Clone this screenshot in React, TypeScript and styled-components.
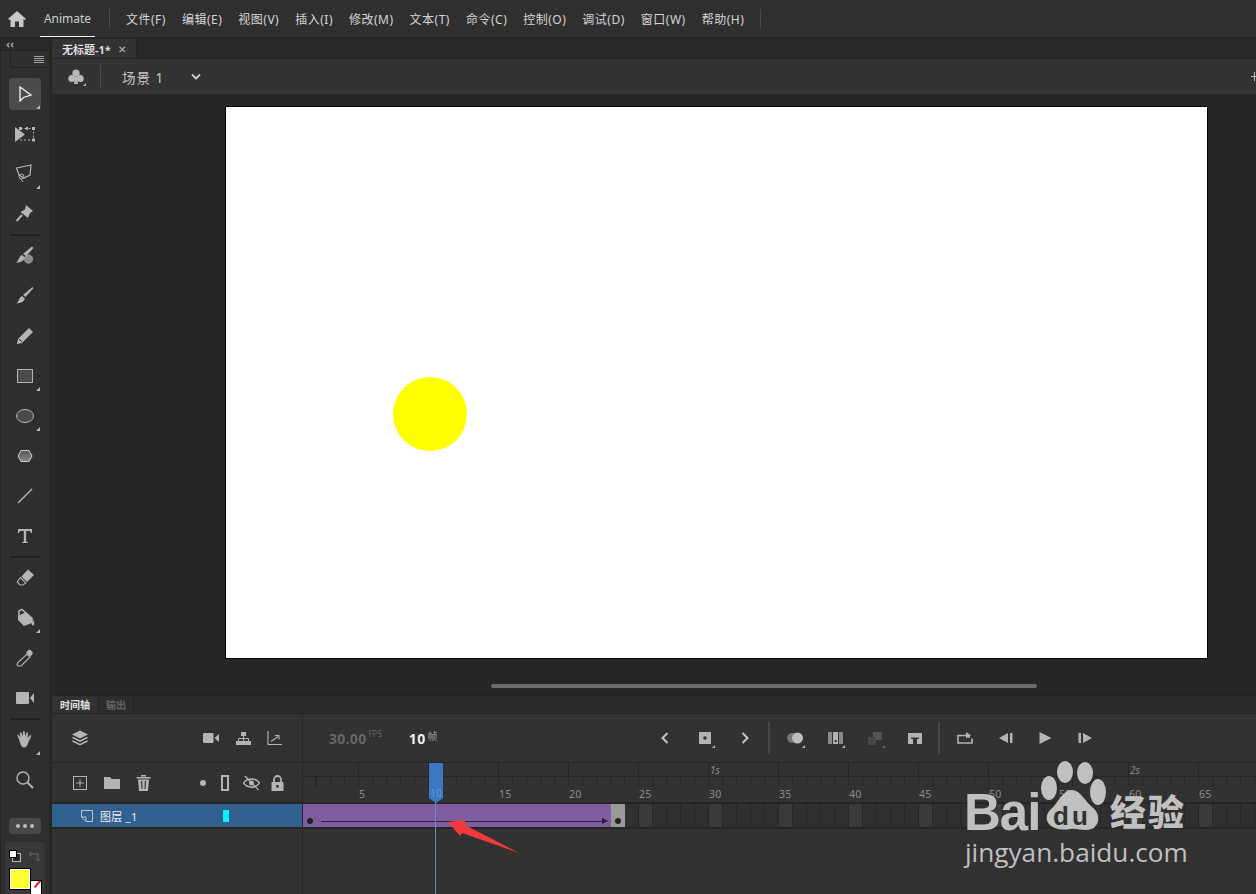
import React from 'react';
import styled, { createGlobalStyle } from 'styled-components';

const FONT = `"Noto Sans", "Noto Sans CJK SC", "Liberation Sans", sans-serif`;
const ICON = '#b4b4b4';
const FRAME = 14;

const GlobalStyle = createGlobalStyle`
  html, body { margin: 0; padding: 0; background: #2b2b2b; overflow: hidden; }
  * { box-sizing: border-box; }
  svg { display: block; }
`;

const Page = styled.div`
  position: relative;
  width: 1256px;
  height: 894px;
  display: flex;
  flex-direction: column;
  overflow: hidden;
  font-family: ${FONT};
  color: #d6d6d6;
`;

/* ---------- menu bar ---------- */
const MenuBar = styled.div`
  height: 39px;
  flex: none;
  display: flex;
  align-items: center;
  background: #303030;
  border-bottom: 2px solid #252525;
`;
const HomeButton = styled.div`
  width: 40px;
  display: flex;
  justify-content: center;
  padding-right: 6px;
`;
const AppTab = styled.div`
  width: 55px;
  height: 37px;
  margin-right: 14px;
  display: flex;
  align-items: center;
  justify-content: center;
  font-size: 12px;
  color: #cfcfcf;
  border-bottom: 1px solid #f2f2f2;
`;
const MenuRule = styled.div`
  width: 1px;
  height: 20px;
  background: #4b4b4b;
  margin-right: 16px;
`;
const MenuItem = styled.span`
  font-size: 12px;
  letter-spacing: 0.5px;
  color: #d4d4d4;
  margin-right: 16px;
  white-space: nowrap;
`;

/* ---------- body ---------- */
const Body = styled.div`
  flex: 1;
  display: flex;
  min-height: 0;
`;
const ToolBar = styled.aside`
  width: 52px;
  flex: none;
  display: flex;
  flex-direction: column;
  align-items: center;
  background: #2f2f2f;
  border-left: 1px solid #242424;
  border-right: 3px solid #262626;
`;
const ToolHead = styled.div`
  width: 100%;
  height: 12px;
  flex: none;
  padding-left: 5px;
  font-size: 11px;
  font-weight: 700;
  line-height: 9px;
  color: #a8a8a8;
  background: #2a2a2a;
  border-bottom: 1px solid #232323;
`;
const ToolGrip = styled.div`
  width: 39px;
  height: 17px;
  flex: none;
  align-self: flex-end;
  display: flex;
  justify-content: flex-end;
  align-items: center;
  padding-right: 5px;
  margin-bottom: 6px;
  border-bottom: 1px solid #232323;
  border-left: 1px solid #232323;
`;
const ToolButton = styled.div<{ $active?: boolean; $more?: boolean }>`
  position: relative;
  width: 32px;
  height: ${(p) => (p.$active ? '32px' : '40px')};
  margin: ${(p) => (p.$active ? '4px 0' : '0')};
  flex: none;
  display: flex;
  align-items: center;
  justify-content: center;
  border-radius: 4px;
  background: ${(p) => (p.$active ? '#4b4b4b' : 'transparent')};
  &::after {
    content: '';
    display: ${(p) => (p.$more ? 'block' : 'none')};
    position: absolute;
    right: 1px;
    bottom: ${(p) => (p.$active ? '1px' : '5px')};
    border-left: 4px solid transparent;
    border-bottom: 4px solid #b8b8b8;
  }
`;
const ToolRule = styled.div`
  width: 31px;
  height: 2px;
  flex: none;
  background: #222;
`;
const MoreButton = styled.div`
  width: 32px;
  height: 16px;
  margin-top: 18px;
  flex: none;
  display: flex;
  align-items: center;
  justify-content: center;
  gap: 3px;
  background: #484848;
  border-radius: 4px;
`;
const MoreDot = styled.i`
  width: 4px;
  height: 4px;
  border-radius: 50%;
  background: #bdbdbd;
`;
const ColorPanel = styled.div`
  position: relative;
  width: 40px;
  flex: 1;
  margin-top: 8px;
  border-radius: 4px 4px 0 0;
  background: #383838;
`;
const SwapRow = styled.div`
  display: flex;
  align-items: center;
  gap: 7px;
  padding: 8px 0 0 4px;
`;
const Swatch = styled.div`
  position: absolute;
  left: 4px;
  top: 26px;
  width: 22px;
  height: 22px;
  background: #ffff33;
  border: 1px solid #000;
  box-shadow: inset 0 0 0 1px #fff;
  z-index: 1;
`;
const StrokeChip = styled.div`
  position: absolute;
  left: 25px;
  top: 38px;
  width: 12px;
  height: 16px;
  background: #fff;
  border: 1px solid #000;
  overflow: hidden;
  &::after {
    content: '';
    position: absolute;
    left: 2px;
    top: 2px;
    width: 9px;
    height: 2px;
    background: #e8192c;
    transform: rotate(-50deg);
  }
`;

/* ---------- document area ---------- */
const Main = styled.main`
  flex: 1;
  min-width: 0;
  display: flex;
  flex-direction: column;
`;
const TabStrip = styled.div`
  height: 20px;
  flex: none;
  display: flex;
  background: #292929;
  border-bottom: 1px solid #242424;
`;
const DocTab = styled.div`
  width: 85px;
  display: flex;
  align-items: center;
  justify-content: space-between;
  padding: 0 10px;
  background: #333;
  border-right: 1px solid #242424;
  font-size: 11px;
  font-weight: 700;
  color: #dedede;
`;
const CloseMark = styled.span`
  font-size: 10px;
  font-weight: 700;
  color: #9a9a9a;
`;
const SceneBar = styled.div`
  height: 35px;
  flex: none;
  display: flex;
  align-items: center;
  background: #333;
  padding-left: 14px;
`;
const SceneIcon = styled.div`
  position: relative;
  width: 20px;
  display: flex;
  justify-content: center;
  &::after {
    content: '';
    position: absolute;
    right: 0;
    bottom: -1px;
    border-left: 3px solid transparent;
    border-bottom: 3px solid #b8b8b8;
  }
`;
const SceneRule = styled.div`
  width: 1px;
  height: 23px;
  margin: 0 21px 0 14px;
  background: #4a4a4a;
`;
const SceneName = styled.span`
  width: 68px;
  font-size: 13.5px;
  letter-spacing: 1px;
  color: #c8c8c8;
`;
const ScenePlus = styled.svg`
  margin-left: auto;
`;
const Canvas = styled.div`
  position: relative;
  flex: none;
  height: 601px;
  background: #272727;
  padding: 12px 0 0 173px;
`;
const Stage = styled.div`
  position: relative;
  width: 983px;
  height: 553px;
  background: #fff;
  border: 1px solid #000;
`;
const Ball = styled.div`
  position: absolute;
  left: 167px;
  top: 270px;
  width: 74px;
  height: 74px;
  border-radius: 50%;
  background: #ffff00;
`;
const ScrollThumb = styled.div`
  position: absolute;
  left: 439px;
  bottom: 7px;
  width: 546px;
  height: 4px;
  border-radius: 2px;
  background: #6b6b6b;
`;

/* ---------- timeline ---------- */
const Timeline = styled.section`
  flex: 1;
  min-height: 0;
  display: flex;
  flex-direction: column;
  background: #323232;
  border-top: 1px solid #222;
`;
const PanelTabs = styled.div`
  height: 18px;
  flex: none;
  display: flex;
  background: #2a2a2a;
  border-bottom: 1px solid #232323;
`;
const PanelTab = styled.div<{ $on?: boolean }>`
  width: ${(p) => (p.$on ? '47px' : '35px')};
  display: flex;
  align-items: center;
  justify-content: center;
  font-size: 10px;
  font-weight: 700;
  color: ${(p) => (p.$on ? '#e0e0e0' : '#666')};
  background: ${(p) => (p.$on ? '#323232' : '#2d2d2d')};
  border-right: 1px solid #232323;
`;
const ControlRow = styled.div`
  height: 49px;
  flex: none;
  display: flex;
  border-bottom: 1px solid #262626;
`;
const LeftCell = styled.div`
  width: 251px;
  flex: none;
  display: flex;
  align-items: center;
  border-right: 1px solid #262626;
`;
const IconSlot = styled.div<{ $w: number; $dim?: boolean; $more?: boolean }>`
  position: relative;
  width: ${(p) => p.$w}px;
  height: 24px;
  flex: none;
  display: flex;
  align-items: center;
  justify-content: center;
  &::after {
    content: '';
    display: ${(p) => (p.$more ? 'block' : 'none')};
    position: absolute;
    right: 10px;
    bottom: 2px;
    border-left: 3px solid transparent;
    border-bottom: 3px solid ${(p) => (p.$dim ? '#666' : '#b8b8b8')};
  }
`;
const Spacer = styled.div<{ $w: number }>`
  width: ${(p) => p.$w}px;
  flex: none;
`;
const FpsBlock = styled.div`
  width: 342px;
  flex: none;
  display: flex;
  align-items: center;
  padding-left: 26px;
`;
const Fps = styled.span`
  font-size: 14px;
  font-weight: 700;
  letter-spacing: 0.3px;
  color: #676767;
`;
const Sup = styled.span<{ $light?: boolean }>`
  align-self: flex-start;
  margin: 14px 0 0 2px;
  font-size: ${(p) => (p.$light ? '10px' : '8px')};
  color: ${(p) => (p.$light ? '#9c9c9c' : '#666')};
`;
const FrameNo = styled.span`
  margin-left: 27px;
  font-size: 14px;
  font-weight: 700;
  letter-spacing: 0.3px;
  color: #eee;
`;
const CtrlRule = styled.div<{ $after: number }>`
  width: 2px;
  height: 32px;
  flex: none;
  margin: 0 ${(p) => p.$after}px 0 3px;
  background: #474747;
  align-self: center;
`;
const ButtonGroup = styled.div`
  display: flex;
  align-items: center;
`;
const RulerRow = styled.div`
  height: 41px;
  flex: none;
  display: flex;
  border-bottom: 2px solid #262626;
`;
const Ruler = styled.div`
  position: relative;
  flex: 1;
  min-width: 0;
`;
const SecondStrip = styled.div`
  height: 14px;
  display: flex;
  padding-left: 55px;
  border-bottom: 1px solid #262626;
`;
const SecondCell = styled.div`
  width: 70px;
  flex: none;
  padding: 0 0 0 1px;
  border-left: 1px solid #262626;
  font-size: 10px;
  line-height: 14px;
  font-style: italic;
  color: #8a8a8a;
`;
const Ticks = styled.div`
  height: 9px;
  background-image: repeating-linear-gradient(
    to right,
    #262626 0,
    #262626 1px,
    transparent 1px,
    transparent ${FRAME}px
  );
  background-position: 13px 0;
`;
const Numbers = styled.div`
  display: flex;
  padding-left: 56px;
`;
const RulerNumber = styled.span`
  width: 70px;
  flex: none;
  font-size: 10.5px;
  line-height: 16px;
  letter-spacing: 0.3px;
  color: #8c8c8c;
`;
const PlayHead = styled.div`
  position: absolute;
  left: ${9 * FRAME}px;
  top: 0;
  width: 14px;
  height: 40px;
  background: #3a78c2;
  clip-path: polygon(0 0, 100% 0, 100% 88%, 50% 100%, 0 88%);
  z-index: 2;
  text-align: center;
  font-size: 10px;
  line-height: 14px;
  padding-top: 23px;
  color: #6c9bd2;
`;
const PlayLine = styled.div`
  position: absolute;
  left: 435px;
  top: 802px;
  bottom: 0;
  width: 1px;
  background: #5a90cf;
  z-index: 2;
`;
const TrackRow = styled.div`
  height: 25px;
  flex: none;
  display: flex;
  border-bottom: 2px solid #262626;
`;
const LayerCell = styled.div`
  width: 251px;
  flex: none;
  display: flex;
  align-items: center;
  padding-left: 29px;
  background: #33618f;
  border-right: 1px solid #262626;
  font-size: 11px;
  color: #eee;
`;
const LayerName = styled.span`
  width: 123px;
  margin-left: 7px;
  letter-spacing: 0.3px;
`;
const LayerColor = styled.i`
  width: 6px;
  height: 12px;
  background: #00f7ff;
`;
const Frames = styled.div`
  position: relative;
  flex: 1;
  min-width: 0;
  display: flex;
`;
const Tween = styled.div`
  position: relative;
  width: ${22 * FRAME}px;
  flex: none;
  background: #7f5da0;
`;
const KeyDot = styled.i<{ $left: number }>`
  position: absolute;
  left: ${(p) => p.$left}px;
  top: 14px;
  width: 6px;
  height: 6px;
  border-radius: 50%;
  background: #222;
`;
const TweenLine = styled.div`
  position: absolute;
  left: 18px;
  right: 5px;
  top: 17px;
  height: 1px;
  background: #2b2233;
  &::after {
    content: '';
    position: absolute;
    right: -2px;
    top: -3px;
    border-left: 6px solid #222;
    border-top: 3.5px solid transparent;
    border-bottom: 3.5px solid transparent;
  }
`;
const EndFrame = styled.div`
  position: relative;
  width: ${FRAME}px;
  flex: none;
  background: #999;
`;
const FrameCell = styled.div<{ $fifth?: boolean }>`
  width: ${FRAME}px;
  flex: none;
  background: ${(p) => (p.$fifth ? '#3a3a3a' : '#303030')};
  border-right: 1px solid #262626;
`;
const EmptyRow = styled.div`
  flex: 1;
  display: flex;
`;
const EmptyLeft = styled.div`
  width: 251px;
  flex: none;
  border-right: 1px solid #262626;
`;

/* ---------- overlays ---------- */
const Arrow = styled.svg`
  position: absolute;
  left: 440px;
  top: 810px;
  z-index: 3;
`;
const Watermark = styled.div`
  position: absolute;
  left: 964px;
  top: 760px;
  width: 230px;
  height: 110px;
  z-index: 4;
  color: #c6c6c6;
  opacity: 0.96;
  pointer-events: none;
`;
const BaiText = styled.span`
  position: absolute;
  left: 0;
  top: 25px;
  font-family: "Liberation Sans", sans-serif;
  font-weight: 700;
  font-size: 51px;
  line-height: 56px;
  letter-spacing: -1px;
`;
const Paw = styled.svg`
  position: absolute;
  left: 76px;
  top: 0;
`;
const JingText = styled.span`
  position: absolute;
  left: 146px;
  top: 28px;
  font-family: "Noto Sans CJK SC", sans-serif;
  font-weight: 900;
  font-size: 36px;
  line-height: 44px;
  letter-spacing: 2px;
  white-space: nowrap;
`;
const Domain = styled.span`
  position: absolute;
  left: 1px;
  top: 74px;
  font-family: "Open Sans", sans-serif;
  font-size: 26.2px;
  line-height: 36px;
  white-space: nowrap;
`;

/* ---------- icons ---------- */
type SvgProps = { children: React.ReactNode; w?: number; h?: number; vb?: string };
const Svg = ({ children, w = 20, h = 20, vb }: SvgProps) => (
  <svg width={w} height={h} viewBox={vb || `0 0 ${w} ${h}`} fill={ICON}>
    {children}
  </svg>
);

const tools: { icon: React.ReactNode; more?: boolean; active?: boolean; rule?: boolean }[] = [
  {
    active: true,
    more: true,
    icon: <Svg><path d="M5 3 L5 17 L8.5 13.5 L16 11 Z" fill="none" stroke="#f4f4f4" strokeWidth="1.3" /></Svg>,
  },
  {
    icon: (
      <Svg w={22} h={20}>
        <path d="M1 3 L1 18 L11 10.5 Z" />
        <rect x="6.5" y="4.5" width="13" height="11.5" fill="none" stroke={ICON} strokeDasharray="2 2" />
        <rect x="5" y="3" width="3" height="3" /><rect x="18" y="3" width="3" height="3" />
        <rect x="18" y="14.5" width="3" height="3" /><rect x="12" y="3" width="2" height="3" />
      </Svg>
    ),
  },
  {
    more: true,
    icon: (
      <Svg>
        <path d="M1.5 4 L16 1 L15 11 L9 14 L4 11 Z" fill="none" stroke={ICON} strokeWidth="1.2" />
        <circle cx="6.5" cy="12.5" r="2.4" fill="none" stroke={ICON} />
        <path d="M5 14 L8 18" fill="none" stroke={ICON} />
      </Svg>
    ),
  },
  {
    rule: true,
    icon: <Svg><path d="M11 1 L18 7 L15 9 L13 14 L5.5 8 L10 5.5 Z" /><path d="M7 11 L1.5 17" stroke={ICON} strokeWidth="2" /></Svg>,
  },
  {
    icon: (
      <Svg>
        <path d="M17 0.5 L18.5 2 L11 10 L8 8 Z" />
        <path d="M7 9 L10 11.5 C9 15 6 16 1 17 C3.5 15 3.5 11 7 9 Z" />
        <circle cx="13.5" cy="13" r="4.2" fill="#8a8a8a" stroke={ICON} strokeWidth="0.6" />
      </Svg>
    ),
  },
  {
    icon: <Svg><path d="M17.5 1 L18.5 2 L10.5 11 L8 9 Z" /><path d="M7 10 L9.8 12.5 C9 16 6 17 1.5 17.5 C4 15.5 3.5 12 7 10 Z" /></Svg>,
  },
  {
    icon: (
      <Svg>
        <path d="M14 2 L18 6 L7 17 L2 18 L3 13 Z" />
        <path d="M4 13 L7.2 16" stroke="#2f2f2f" strokeWidth="1" />
      </Svg>
    ),
  },
  {
    more: true,
    icon: <Svg><rect x="2.5" y="3.5" width="15" height="13" fill="#4b4b4b" stroke={ICON} /></Svg>,
  },
  {
    more: true,
    icon: <Svg><ellipse cx="10" cy="10" rx="8.5" ry="6.5" fill="#4b4b4b" stroke={ICON} /></Svg>,
  },
  {
    icon: (
      <Svg>
        <defs>
          <linearGradient id="hex" x1="0" y1="0" x2="0" y2="1">
            <stop offset="0" stopColor="#555" />
            <stop offset="1" stopColor="#8a8a8a" />
          </linearGradient>
        </defs>
        <path d="M6 4.5 L14 4.5 L17 10 L14 15.5 L6 15.5 L3 10 Z" fill="url(#hex)" stroke="#cfcfcf" />
      </Svg>
    ),
  },
  {
    icon: <Svg><path d="M3 17 L17 3" stroke={ICON} strokeWidth="1.4" /></Svg>,
  },
  {
    rule: true,
    icon: (
      <Svg w={16} h={16}>
        <path d="M1 1 H15 V5 H14 C13.8 3.5 13 3 12 3 H9.2 V13 C9.2 14 10 14.2 11 14.2 V15 H5 V14.2 C6 14.2 6.8 14 6.8 13 V3 H4 C3 3 2.2 3.5 2 5 H1 Z" />
      </Svg>
    ),
  },
  {
    icon: (
      <Svg>
        <path d="M13 1.5 L19 7 L12 14 L6.5 8.5 Z" />
        <path d="M5.5 9.5 L10.8 15 L8 17 L5 17 L2.2 14 Z" fill="none" stroke={ICON} strokeWidth="1.1" />
      </Svg>
    ),
  },
  {
    more: true,
    icon: (
      <Svg>
        <path d="M3 8 L11 4 L18 10 L17 15 L9 18 L3 12 Z" />
        <path d="M4 8 V3 L7 1.5 L11 5" fill="none" stroke={ICON} strokeWidth="1.6" />
        <path d="M18 11 L19.5 16 L18 18 L16.5 16 Z" />
      </Svg>
    ),
  },
  {
    icon: (
      <Svg>
        <path d="M12 6 L15 9 L6 18 L3 18 L2 17 L2.5 15 Z" fill="none" stroke={ICON} strokeWidth="1.1" />
        <path d="M11 4.5 L13.5 2 C15 0.5 19 4.5 17.5 6 L15.5 8.5 Z" />
      </Svg>
    ),
  },
  {
    rule: true,
    icon: <Svg><rect x="1" y="4" width="13" height="12" rx="1" /><path d="M15 10 L19 5 V15 Z" /></Svg>,
  },
  {
    more: true,
    icon: (
      <Svg>
        <path d="M4 9 C3 7 2 5 2.5 4.5 C3.3 4 4.5 5.8 5.5 7.5 L4.8 3 C4.8 1.8 6.2 1.8 6.5 3 L7.8 6.5 L8 1.8 C8.2 .7 9.6 .7 9.8 1.8 L10.2 6.5 L11.5 2.8 C12 1.8 13.2 2.2 13 3.3 L12.5 8 L14.8 5.5 C15.8 4.7 16.8 5.6 16 6.7 L13.5 12 C12.5 16 11 17.5 9 17.5 C6.5 17.5 5.3 14 4 9 Z" />
      </Svg>
    ),
  },
  {
    icon: (
      <Svg>
        <circle cx="8" cy="8" r="6" fill="none" stroke={ICON} strokeWidth="1.4" />
        <path d="M12.5 12.5 L18 18" stroke={ICON} strokeWidth="2" />
      </Svg>
    ),
  },
];

const menus = ['文件(F)', '编辑(E)', '视图(V)', '插入(I)', '修改(M)', '文本(T)', '命令(C)', '控制(O)', '调试(D)', '窗口(W)', '帮助(H)'];

const secondLabels: Record<number, string> = { 5: '1s', 11: '2s' };

export default function App() {
  const cells = Array.from({ length: 46 }, (_, i) => i + 24);
  const numbers = Array.from({ length: 13 }, (_, i) => (i + 1) * 5);
  const seconds = Array.from({ length: 13 }, (_, i) => i);

  return (
    <Page>
      <GlobalStyle />

      <MenuBar>
        <HomeButton>
          <svg width="18" height="16" viewBox="0 0 18 16" fill="#c8c8c8">
            <path d="M9 0 L18 8 L16.5 9 L15.5 8.2 V16 H11 V10.5 H7 V16 H2.5 V8.2 L1.5 9 L0 8 Z" />
          </svg>
        </HomeButton>
        <AppTab>Animate</AppTab>
        <MenuRule />
        {menus.map((m) => (
          <MenuItem key={m}>{m}</MenuItem>
        ))}
        <MenuRule />
      </MenuBar>

      <Body>
        <ToolBar>
          <ToolHead>‹‹</ToolHead>
          <ToolGrip>
            <svg width="10" height="7" viewBox="0 0 10 7" fill="#a0a0a0">
              <rect width="10" height="1" /><rect y="2" width="10" height="1" />
              <rect y="4" width="10" height="1" /><rect y="6" width="10" height="1" />
            </svg>
          </ToolGrip>
          {tools.map((t, i) => (
            <React.Fragment key={i}>
              <ToolButton $active={t.active} $more={t.more}>{t.icon}</ToolButton>
              {t.rule && <ToolRule />}
            </React.Fragment>
          ))}
          <MoreButton><MoreDot /><MoreDot /><MoreDot /></MoreButton>
          <ColorPanel>
            <SwapRow>
              <svg width="12" height="12" viewBox="0 0 12 12">
                <rect x="3.5" y="3.5" width="8" height="8" fill="#2b2b2b" stroke="#bbb" />
                <rect x="0.5" y="0.5" width="7" height="7" fill="#fff" stroke="#000" />
              </svg>
              <svg width="12" height="12" viewBox="0 0 12 12" fill="none" stroke="#555" strokeWidth="1.5">
                <path d="M1 4 H10 V11 M1 4 L3.5 1.5 M1 4 L3.5 6.5 M10 11 L7.5 8.5 M10 11 L12 9" />
              </svg>
            </SwapRow>
            <Swatch />
            <StrokeChip />
          </ColorPanel>
        </ToolBar>

        <Main>
          <TabStrip>
            <DocTab>无标题-1*<CloseMark>✕</CloseMark></DocTab>
          </TabStrip>
          <SceneBar>
            <SceneIcon>
              <svg width="16" height="16" viewBox="0 0 16 16" fill="#b8b8b8">
                <circle cx="8" cy="4.2" r="3.6" /><circle cx="3.8" cy="9.5" r="3.5" /><circle cx="12.2" cy="9.5" r="3.5" />
                <path d="M7 8 H9 L10 15 H6 Z" />
              </svg>
            </SceneIcon>
            <SceneRule />
            <SceneName>场景 1</SceneName>
            <svg width="12" height="8" viewBox="0 0 12 8" fill="none" stroke="#c8c8c8" strokeWidth="2">
              <path d="M2 1.5 L6 5.5 L10 1.5" />
            </svg>
            <ScenePlus width="5" height="9" viewBox="0 0 5 9" fill="#bbb">
              <rect x="0" y="4" width="5" height="1" /><rect x="3" y="0" width="1" height="9" />
            </ScenePlus>
          </SceneBar>
          <Canvas>
            <Stage><Ball /></Stage>
            <ScrollThumb />
          </Canvas>

          <Timeline>
            <PanelTabs>
              <PanelTab $on>时间轴</PanelTab>
              <PanelTab>输出</PanelTab>
            </PanelTabs>

            <ControlRow>
              <LeftCell>
                <Spacer $w={13} />
                <IconSlot $w={30}>
                  <Svg w={16} h={16}>
                    <path d="M8 0.5 L16 4.5 L8 8.5 L0 4.5 Z" />
                    <path d="M1 6.8 L8 10.3 L15 6.8 L16 8 L8 12 L0 8 Z" />
                    <path d="M1 10.3 L8 13.8 L15 10.3 L16 11.5 L8 15.5 L0 11.5 Z" />
                  </Svg>
                </IconSlot>
                <Spacer $w={100} />
                <IconSlot $w={32}>
                  <Svg w={16} h={12}><rect y="1" width="10.5" height="10" rx="1" /><path d="M11.5 6 L16 2 V10 Z" /></Svg>
                </IconSlot>
                <IconSlot $w={32}>
                  <Svg w={15} h={13}>
                    <rect x="5" y="0" width="5" height="4" /><rect x="0" y="9" width="5" height="4" />
                    <rect x="5" y="9" width="5" height="4" /><rect x="10" y="9" width="5" height="4" />
                    <path d="M7.5 4 V9 M2.5 9 V6.5 H12.5 V9" fill="none" stroke={ICON} />
                  </Svg>
                </IconSlot>
                <IconSlot $w={30}>
                  <Svg w={15} h={14}>
                    <path d="M1 0 V13.5 H15 M4 10.5 L11 5.5 M8 4.5 H12 V8.5" fill="none" stroke={ICON} strokeWidth="1.1" />
                  </Svg>
                </IconSlot>
              </LeftCell>
              <FpsBlock>
                <Fps>30.00</Fps>
                <Sup>FPS</Sup>
                <FrameNo>10</FrameNo>
                <Sup $light>帧</Sup>
              </FpsBlock>
              <ButtonGroup>
                <IconSlot $w={40}>
                  <svg width="8" height="12" viewBox="0 0 8 12" fill="none" stroke="#c4c4c4" strokeWidth="2"><path d="M6.5 1 L1.5 6 L6.5 11" /></svg>
                </IconSlot>
                <IconSlot $w={40} $more>
                  <Svg w={12} h={12}><path fillRule="evenodd" d="M0 0 H12 V12 H0 Z M6 4.2 A1.8 1.8 0 1 0 6 7.8 A1.8 1.8 0 1 0 6 4.2 Z" /></Svg>
                </IconSlot>
                <IconSlot $w={40}>
                  <svg width="8" height="12" viewBox="0 0 8 12" fill="none" stroke="#c4c4c4" strokeWidth="2"><path d="M1.5 1 L6.5 6 L1.5 11" /></svg>
                </IconSlot>
                <CtrlRule $after={5} />
                <IconSlot $w={40} $more>
                  <Svg w={18} h={12}><circle cx="6" cy="6" r="5" fill="#777" /><circle cx="11.5" cy="6" r="5.5" fill="#bdbdbd" /></Svg>
                </IconSlot>
                <IconSlot $w={40} $more>
                  <Svg w={15} h={12}>
                    <rect width="4" height="12" fill="#8a8a8a" /><rect x="5" width="5" height="12" />
                    <rect x="11" width="4" height="12" fill="#8a8a8a" /><rect x="6.5" y="8" width="2" height="2" fill="#333" />
                  </Svg>
                </IconSlot>
                <IconSlot $w={40} $dim $more>
                  <Svg w={14} h={13}>
                    <rect x="5" y="0" width="9" height="8" fill="#555" /><rect x="0" y="5" width="8" height="8" fill="#484848" />
                  </Svg>
                </IconSlot>
                <IconSlot $w={40}>
                  <Svg w={14} h={11}>
                    <path fillRule="evenodd" d="M0 0 H14 V11 H9 V6 H11 V4.5 H3 V6 H5 V11 H0 Z" />
                  </Svg>
                </IconSlot>
                <CtrlRule $after={5} />
                <IconSlot $w={40}>
                  <Svg w={16} h={12}>
                    <path d="M12 6 V3.5 H1 V11 H15 V6.5" fill="none" stroke={ICON} strokeWidth="1.6" />
                    <path d="M9 0 L14 3.5 L9 6.5 Z" />
                  </Svg>
                </IconSlot>
                <IconSlot $w={40}>
                  <Svg w={15} h={12}><path d="M10 1 V11 L1 6 Z" /><rect x="12" y="1" width="2.5" height="10" /></Svg>
                </IconSlot>
                <IconSlot $w={40}>
                  <Svg w={13} h={12}><path d="M0.5 0 L12.5 6 L0.5 12 Z" /></Svg>
                </IconSlot>
                <IconSlot $w={40}>
                  <Svg w={15} h={12}><rect x="0.5" y="1" width="2.5" height="10" /><path d="M5 1 L14 6 L5 11 Z" /></Svg>
                </IconSlot>
              </ButtonGroup>
            </ControlRow>

            <RulerRow>
              <LeftCell>
                <Spacer $w={13} />
                <IconSlot $w={30}>
                  <Svg w={14} h={14}>
                    <rect x="0.5" y="0.5" width="13" height="13" fill="none" stroke={ICON} />
                    <path d="M7 3 V11 M3 7 H11" stroke={ICON} />
                  </Svg>
                </IconSlot>
                <IconSlot $w={34}>
                  <Svg w={16} h={13}><path d="M0 1 H6 L7.5 3 H16 V13 H0 Z" /></Svg>
                </IconSlot>
                <IconSlot $w={28}>
                  <Svg w={15} h={16}>
                    <path d="M0.5 2 H14.5 V3.5 H0.5 Z M5 0 H10 V1.5 H5 Z" />
                    <path fillRule="evenodd" d="M2 4.5 H13 L12 16 H3 Z M5 6 L5.5 14 H6.5 L6.2 6 Z M8.8 6 L8.5 14 H9.5 L10 6 Z" />
                  </Svg>
                </IconSlot>
                <Spacer $w={34} />
                <IconSlot $w={24}>
                  <Svg w={6} h={6}><circle cx="3" cy="3" r="3" /></Svg>
                </IconSlot>
                <IconSlot $w={20}>
                  <Svg w={8} h={16}><rect x="1" y="1" width="6" height="14" fill="none" stroke={ICON} strokeWidth="2" /></Svg>
                </IconSlot>
                <IconSlot $w={32}>
                  <Svg w={17} h={16}>
                    <path d="M0.5 8 C4 2.5 13 2.5 16.5 8 C13 13.5 4 13.5 0.5 8 Z" fill="none" stroke={ICON} strokeWidth="1.5" />
                    <circle cx="8.5" cy="8" r="2.5" />
                    <path d="M2 1 L15.5 15" stroke={ICON} strokeWidth="1.3" />
                  </Svg>
                </IconSlot>
                <IconSlot $w={20}>
                  <Svg w={13} h={16}>
                    <path d="M3 7 V4.5 A3.5 3.5 0 0 1 10 4.5 V7" fill="none" stroke={ICON} strokeWidth="1.8" />
                    <path fillRule="evenodd" d="M0.5 7 H12.5 V16 H0.5 Z M6.5 10 A1.4 1.4 0 1 0 6.5 12.8 A1.4 1.4 0 1 0 6.5 10 Z" />
                  </Svg>
                </IconSlot>
              </LeftCell>
              <Ruler>
                <SecondStrip>
                  {seconds.map((s) => (
                    <SecondCell key={s}>{secondLabels[s] ?? ''}</SecondCell>
                  ))}
                </SecondStrip>
                <Ticks />
                <Numbers>
                  {numbers.map((n) => (
                    <RulerNumber key={n}>{n}</RulerNumber>
                  ))}
                </Numbers>
                <PlayHead>10</PlayHead>
              </Ruler>
            </RulerRow>

            <TrackRow>
              <LayerCell>
                <svg width="12" height="12" viewBox="0 0 12 12" fill="none" stroke="#b9c6d6">
                  <path d="M0.5 0.5 H11.5 V11.5 H5 L0.5 7 Z M0.5 7 H5 V11.5" />
                </svg>
                <LayerName>图层 _1</LayerName>
                <LayerColor />
              </LayerCell>
              <Frames>
                <Tween>
                  <KeyDot $left={4} />
                  <TweenLine />
                </Tween>
                <EndFrame><KeyDot $left={4} /></EndFrame>
                {cells.map((n) => (
                  <FrameCell key={n} $fifth={n % 5 === 0} />
                ))}
              </Frames>
            </TrackRow>

            <EmptyRow><EmptyLeft /></EmptyRow>
          </Timeline>
        </Main>
      </Body>

      <PlayLine />

      <Arrow width="90" height="50" viewBox="0 0 90 50">
        <path d="M8 12 L25 10 L25 15 L79 43 L22 23 L20 26 Z" fill="#f23a3a" />
      </Arrow>

      <Watermark>
        <BaiText>Bai</BaiText>
        <Paw width="70" height="72" viewBox="0 0 70 72" fill="#c6c6c6">
          <ellipse cx="9" cy="28" rx="8" ry="12" />
          <ellipse cx="25" cy="12" rx="8" ry="11" />
          <ellipse cx="45" cy="13" rx="8" ry="11" />
          <ellipse cx="58" cy="32" rx="8" ry="13" />
          <path fillRule="evenodd" d="M32 30 C40 30 44 40 52 47 C62 54 60 70 46 70 C40 70 36 68 30 69 C14 72 0 62 10 50 C18 44 22 30 32 30 Z" />
          <text x="13" y="65" fontFamily="Liberation Sans, sans-serif" fontWeight="700" fontSize="26" fill="#323232" letterSpacing="3">du</text>
        </Paw>
        <JingText>经验</JingText>
        <Domain>jingyan.baidu.com</Domain>
      </Watermark>
    </Page>
  );
}
